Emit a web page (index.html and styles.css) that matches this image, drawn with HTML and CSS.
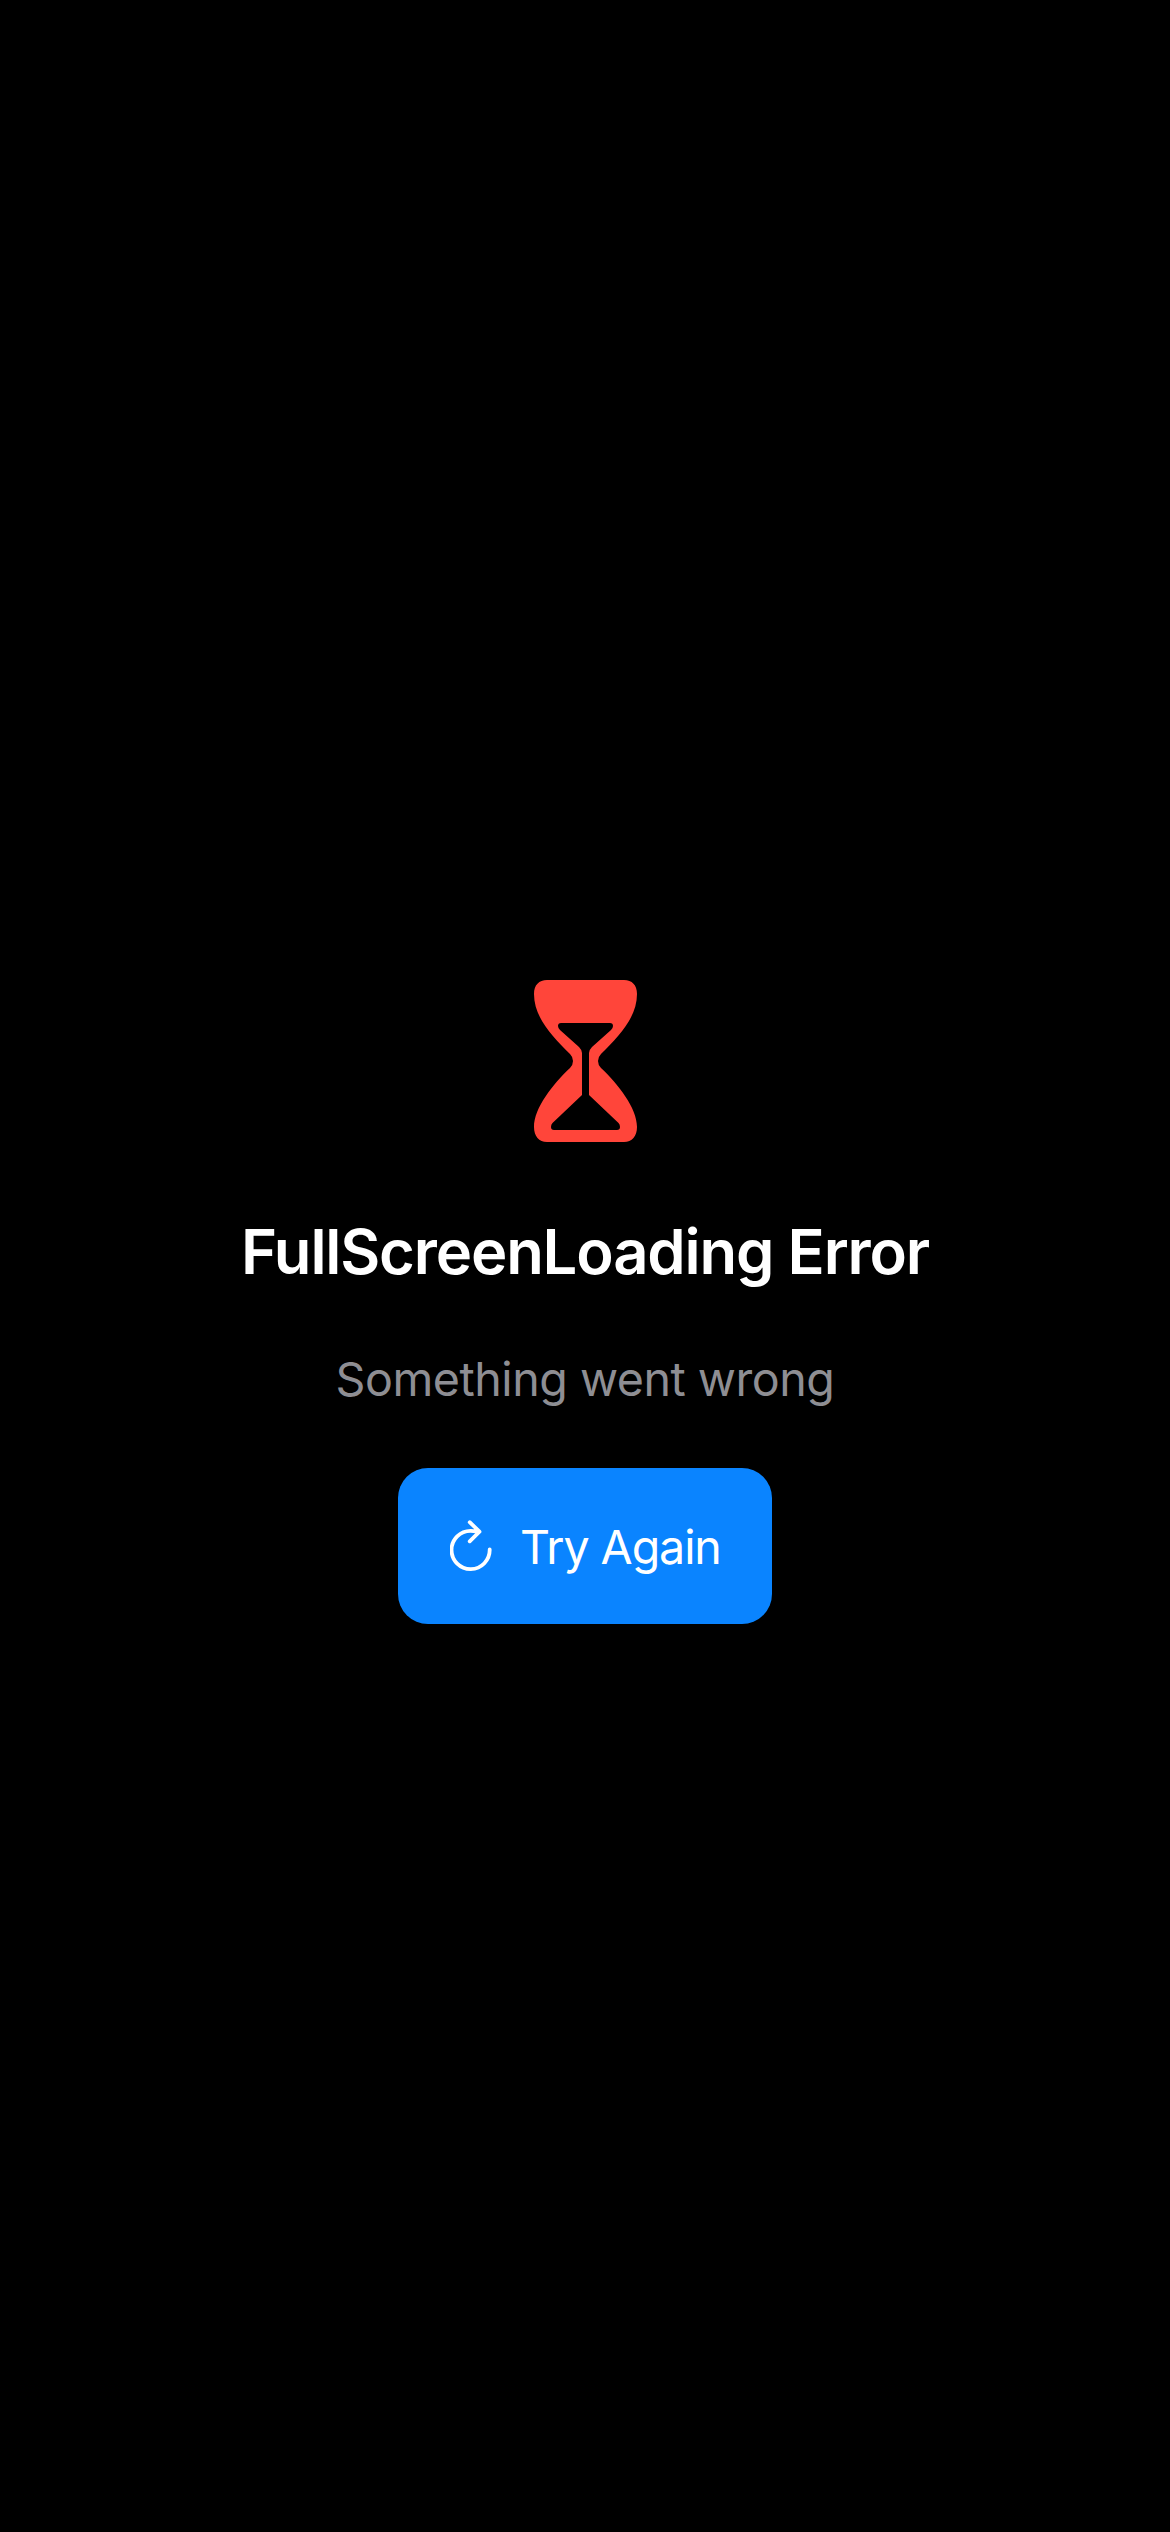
FILE: index.html
```html
<!DOCTYPE html>
<html lang="en">
<head>
<meta charset="utf-8">
<title>FullScreenLoading Error</title>
<link rel="stylesheet" href="styles.css">
</head>
<body>
<main class="screen">
  <svg class="hourglass" viewBox="0 0 103 162" aria-hidden="true">
    <path fill="#ff453a" fill-rule="evenodd" d="M13 0H90C98 0 103 5 103 14C103 38 84 57 67 74Q64 77 64 81Q64 85 67 88C84 104 103 128 103 147C103 156 98 162 90 162H13C5 162 0 156 0 147C0 128 19 104 36 88Q39 85 39 81Q39 77 36 74C19 57 0 38 0 14C0 5 5 0 13 0ZM27 43Q24 43 24 46Q24 48 26 50L45 67Q48 70 48 73V115L18.500 143Q17 144.500 17 147Q17 150 20 150H83Q86 150 86 147Q86 144.500 84.500 143L55 115V73Q55 70 58 67L77 50Q79 48 79 46Q79 43 76 43Z"/>
  </svg>
  <h1 class="title">FullScreenLoading Error</h1>
  <p class="message">Something went wrong</p>
  <button class="retry" type="button">
    <svg class="retry-icon" viewBox="0 0 42 52" aria-hidden="true">
      <path d="M39.700 29.500A19.100 19.100 0 1 1 20.800 10.900L29 11.700M19.700 2.200L29.500 11.700L19.700 21.300"/>
    </svg>
    <span class="retry-label">Try Again</span>
  </button>
</main>
</body>
</html>
```
FILE: styles.css
```css
* {
  box-sizing: border-box;
}

body {
  margin: 0;
  background: #000;
  font-family: Inter, "Liberation Sans", sans-serif;
}

.screen {
  display: flex;
  flex-direction: column;
  align-items: center;
  min-height: 2532px;
  padding-top: 980px;
}

.hourglass {
  width: 103px;
  height: 162px;
}

.title {
  margin: 71px 0 0;
  color: #fff;
  font-size: 61.5px;
  font-weight: 600;
  line-height: 77px;
  letter-spacing: -1.15px;
  white-space: nowrap;
}

.message {
  margin: 60px 0 0;
  color: #8e8e93;
  font-size: 46.6px;
  line-height: 58px;
  letter-spacing: -0.48px;
  white-space: nowrap;
}

.retry {
  display: flex;
  align-items: center;
  width: 374px;
  height: 156px;
  margin-top: 60px;
  padding: 2px 0 0 52px;
  border: 0;
  border-radius: 30px;
  background: #0a84ff;
  color: #fff;
  font: inherit;
}

.retry-icon {
  width: 42px;
  height: 52px;
  margin-bottom: 3px;
  fill: none;
  stroke: #fff;
  stroke-width: 3.8;
  stroke-linecap: round;
  stroke-linejoin: round;
}

.retry-label {
  margin-left: 28px;
  font-size: 46.6px;
  line-height: 58px;
  letter-spacing: -1.1px;
  white-space: nowrap;
}
```
